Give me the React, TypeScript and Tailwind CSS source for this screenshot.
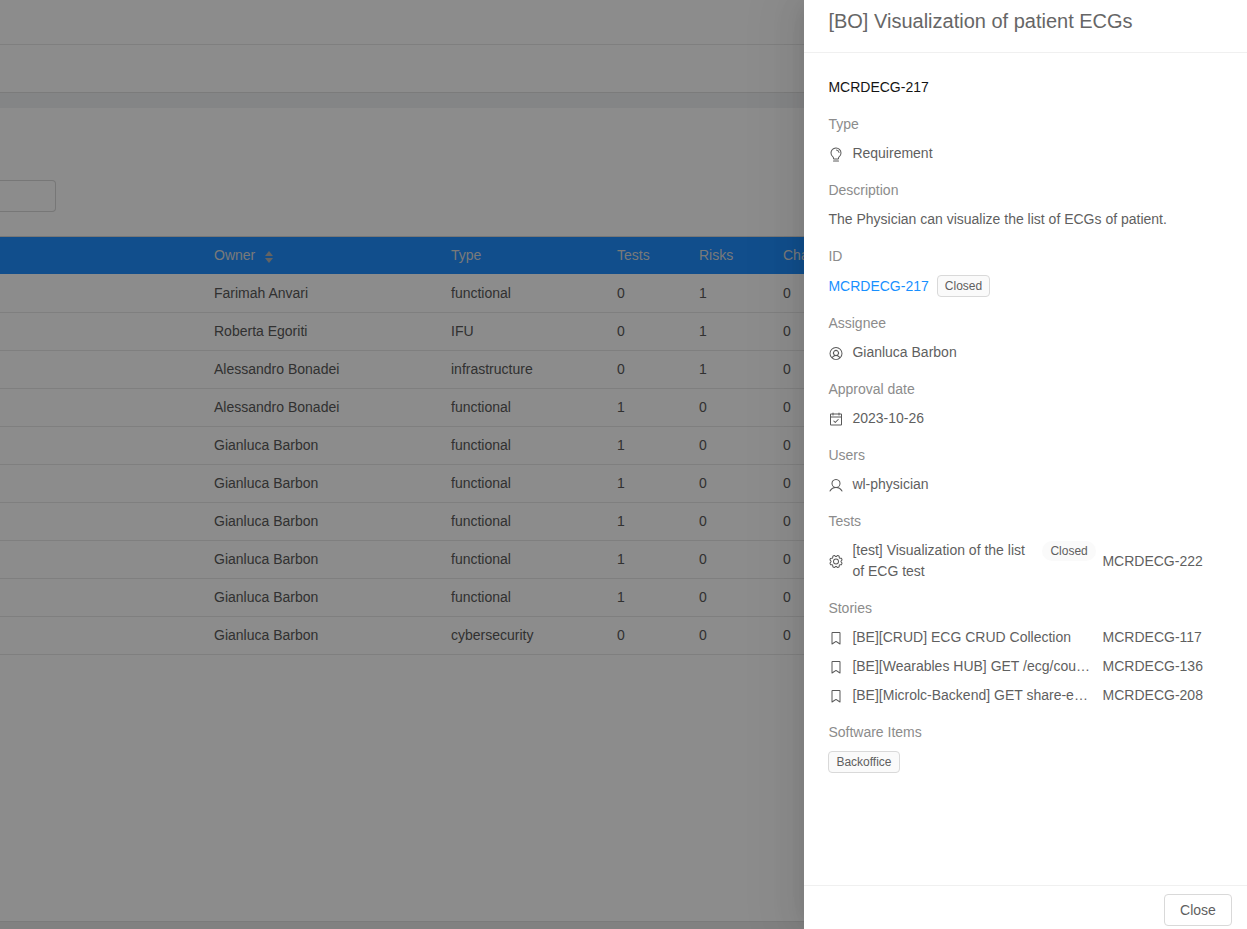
import React from 'react';
import { PiLightbulb, PiUserCircle, PiCalendarCheck, PiUser, PiGear, PiBookmarkSimple } from 'react-icons/pi';

const rows = [
  ['Farimah Anvari', 'functional', '0', '1', '0'],
  ['Roberta Egoriti', 'IFU', '0', '1', '0'],
  ['Alessandro Bonadei', 'infrastructure', '0', '1', '0'],
  ['Alessandro Bonadei', 'functional', '1', '0', '0'],
  ['Gianluca Barbon', 'functional', '1', '0', '0'],
  ['Gianluca Barbon', 'functional', '1', '0', '0'],
  ['Gianluca Barbon', 'functional', '1', '0', '0'],
  ['Gianluca Barbon', 'functional', '1', '0', '0'],
  ['Gianluca Barbon', 'functional', '1', '0', '0'],
  ['Gianluca Barbon', 'cybersecurity', '0', '0', '0'],
];

const stories = [
  ['[BE][CRUD] ECG CRUD Collection', 'MCRDECG-117'],
  ['[BE][Wearables HUB] GET /ecg/count endpoint', 'MCRDECG-136'],
  ['[BE][Microlc-Backend] GET share-ecg endpoint', 'MCRDECG-208'],
];

const Label = ({ children }: { children: React.ReactNode }) => (
  <div className="h-[21px] leading-[21px] text-[#8c8c8c]">{children}</div>
);

const Tag = ({ children }: { children: React.ReactNode }) => (
  <span className="inline-block h-[22px] rounded-[4px] border border-[#d9d9d9] bg-[#fafafa] px-[7px] text-xs leading-[20px] text-[#5f5f5f]">
    {children}
  </span>
);

const IconSlot = ({ children }: { children: React.ReactNode }) => (
  <span className="flex w-[16px] shrink-0 justify-center pt-px text-[#595959]">{children}</span>
);

const IconRow = ({ icon, children }: { icon: React.ReactNode; children: React.ReactNode }) => (
  <div className="mt-2 flex h-[21px] items-center leading-[21px]">
    <IconSlot>{icon}</IconSlot>
    <span className="ml-2">{children}</span>
  </div>
);

const App = () => {
  return (
    <div className="relative h-[929px] w-[1247px] overflow-hidden bg-white font-['Liberation_Sans',sans-serif] text-sm text-[#595959]">
      <div className="h-[45px] border-b border-[#e8e8e8]" />
      <div className="h-[48px] border-b border-[#e0e0e0]" />
      <div className="h-[15px] bg-[#f0f2f5]" />
      <div className="pt-[72px]">
        <div className="h-8 w-[56px] rounded-r-[4px] border border-l-0 border-[#d9d9d9]" />
      </div>
      <div className="mt-[24px]">
        <div className="flex h-[38px] items-center border-t border-[#d9d9d9] bg-[#1f8fff] pb-0.5 text-[#dddddd]">
          <div className="flex w-[451px] items-center pl-[214px]">
            Owner
            <svg width="10" height="14" viewBox="0 0 10 14" className="ml-[9px] mt-1 text-[#b4b4b4]" fill="currentColor">
              <path d="M5 1l4 5H1zM5 13L1 8h8z" />
            </svg>
          </div>
          <div className="w-[166px]">Type</div>
          <div className="w-[82px]">Tests</div>
          <div className="w-[84px]">Risks</div>
          <div>Changes</div>
        </div>
        <div className="pt-px">
          {rows.map((r, i) => (
            <div key={i} className="flex h-[38px] items-center border-b border-[#e8e8e8] pb-0.5">
              <div className="w-[451px] pl-[214px]">{r[0]}</div>
              <div className="w-[166px]">{r[1]}</div>
              <div className="w-[82px]">{r[2]}</div>
              <div className="w-[84px]">{r[3]}</div>
              <div>{r[4]}</div>
            </div>
          ))}
        </div>
      </div>
      <div className="absolute bottom-0 left-0 h-2 w-full border-t border-[#e0e0e0] bg-[#ebebeb]" />

      {/* mask over the page */}
      <div className="absolute inset-0 bg-black/45" />

      <div className="absolute inset-y-0 right-0 flex w-[443px] flex-col bg-white text-[#5f5f5f] shadow-[-6px_0_16px_-8px_rgba(0,0,0,0.08),-9px_0_28px_0_rgba(0,0,0,0.05),-12px_0_48px_16px_rgba(0,0,0,0.03)]">
        <div className="h-[53px] shrink-0 border-b border-[#f0f0f0] pl-[24.4px] pt-[8px] text-xl leading-[26px] text-[#666666]">
          [BO] Visualization of patient ECGs
        </div>
        <div className="flex-1 pl-[24.4px] pr-[24px] pt-[24px]">
          <div className="h-[21px] leading-[21px] text-[#141414]">MCRDECG-217</div>

          <div className="mt-4"><Label>Type</Label></div>
          <IconRow icon={<PiLightbulb size={17} />}>Requirement</IconRow>

          <div className="mt-4"><Label>Description</Label></div>
          <div className="mt-2 h-[21px] leading-[21px]">The Physician can visualize the list of ECGs of patient.</div>

          <div className="mt-4"><Label>ID</Label></div>
          <div className="mt-2 flex h-[22px] items-center">
            <span className="text-[#1890ff]">MCRDECG-217</span>
            <span className="ml-[8.1px]"><Tag>Closed</Tag></span>
          </div>

          <div className="mt-4"><Label>Assignee</Label></div>
          <IconRow icon={<PiUserCircle size={17} />}>Gianluca Barbon</IconRow>

          <div className="mt-4"><Label>Approval date</Label></div>
          <IconRow icon={<PiCalendarCheck size={17} />}>2023-10-26</IconRow>

          <div className="mt-4"><Label>Users</Label></div>
          <IconRow icon={<PiUser size={17} />}>wl-physician</IconRow>

          <div className="mt-4"><Label>Tests</Label></div>
          <div className="mt-2 flex h-[42px] items-center">
            <IconSlot><PiGear size={17} /></IconSlot>
            <div className="ml-2 w-[182px] leading-[21px]">[test] Visualization of the list of ECG test</div>
            <div className="ml-2 w-[60px] self-start">
              <span className="inline-block h-[20px] rounded-full bg-[#fafafa] px-[8px] text-xs leading-[20px]">Closed</span>
            </div>
            <span>MCRDECG-222</span>
          </div>

          <div className="mt-4"><Label>Stories</Label></div>
          <div className="mt-2 flex flex-col gap-2">
            {stories.map(([title, id]) => (
              <div key={id} className="flex h-[21px] items-center leading-[21px]">
                <IconSlot><PiBookmarkSimple size={18} /></IconSlot>
                <span className="ml-2 w-[238px] truncate">{title}</span>
                <span className="ml-[12.2px]">{id}</span>
              </div>
            ))}
          </div>

          <div className="mt-4"><Label>Software Items</Label></div>
          <div className="mt-2"><Tag>Backoffice</Tag></div>
        </div>
        <div className="flex h-[44px] shrink-0 justify-end border-t border-[#f0f0f0] pr-[15px] pt-2">
          <button className="h-8 w-[68px] rounded-[4px] border border-[#d9d9d9] bg-white text-sm text-[#5f5f5f]">Close</button>
        </div>
      </div>
    </div>
  );
};

export default App;
